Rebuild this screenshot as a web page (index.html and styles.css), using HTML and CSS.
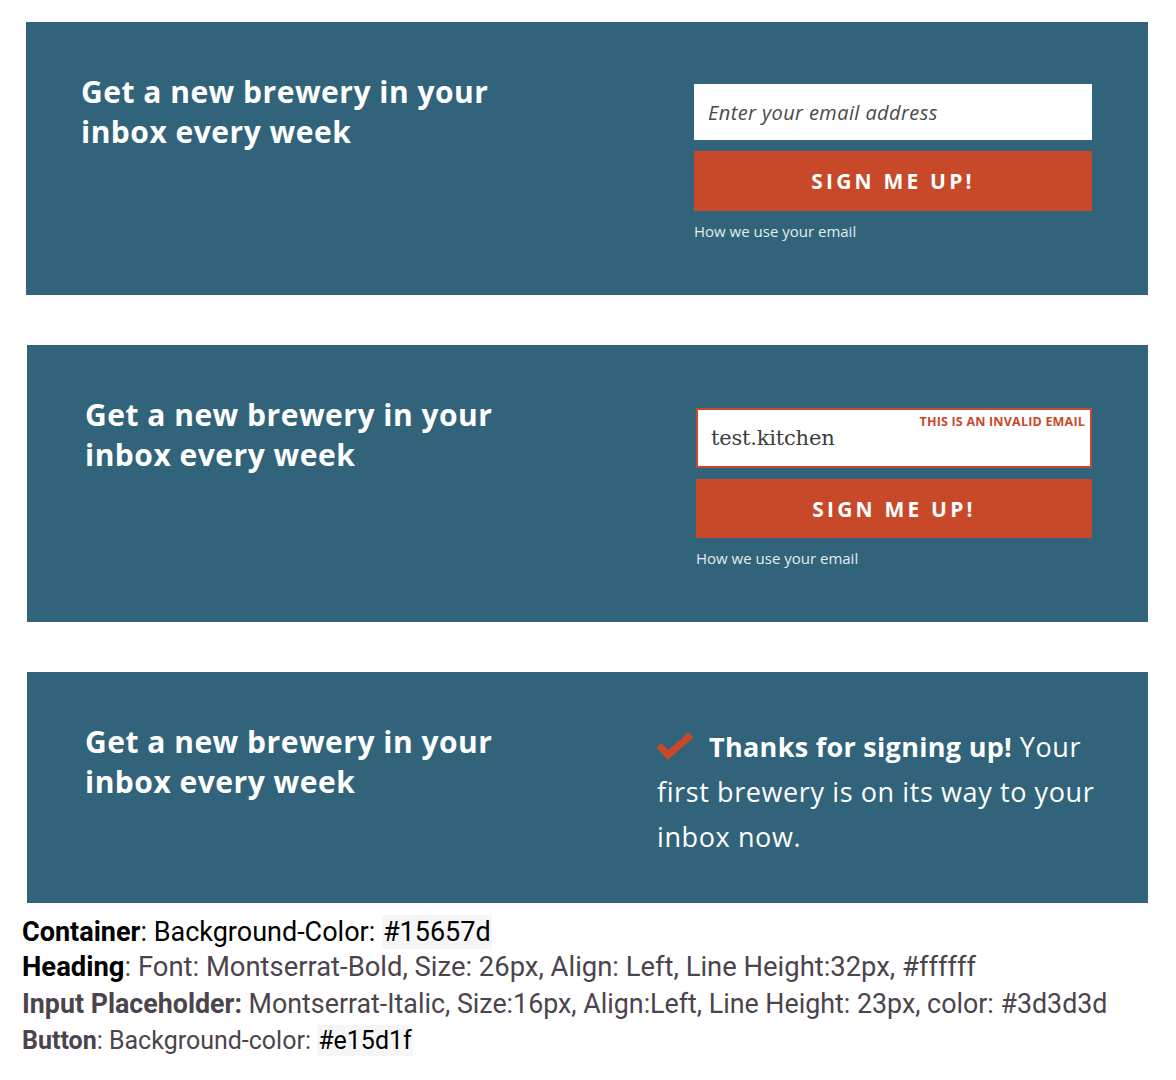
FILE: index.html
```html
<!DOCTYPE html>
<html lang="en">
<head>
<meta charset="utf-8">
<title>Brewery newsletter signup states</title>
<link rel="stylesheet" href="styles.css">
</head>
<body>
<main class="page">
  <section class="signup signup--first">
    <h2 class="signup__title">Get a new brewery in your<br>inbox every week</h2>
    <form class="signup__form">
      <div class="field">
        <input class="field__input" type="email" placeholder="Enter your email address">
      </div>
      <button class="btn" type="button">SIGN ME UP!</button>
      <a class="signup__note" href="#">How we use your email</a>
    </form>
  </section>

  <section class="signup">
    <h2 class="signup__title">Get a new brewery in your<br>inbox every week</h2>
    <form class="signup__form signup__form--narrow">
      <div class="field field--error">
        <input class="field__input field__input--filled" type="text" value="test.kitchen">
        <span class="field__error">THIS IS AN INVALID EMAIL</span>
      </div>
      <button class="btn" type="button">SIGN ME UP!</button>
      <a class="signup__note" href="#">How we use your email</a>
    </form>
  </section>

  <section class="signup signup--done">
    <h2 class="signup__title">Get a new brewery in your<br>inbox every week</h2>
    <p class="signup__thanks"><svg class="check" width="36" height="28" viewBox="0 0 36 28" aria-hidden="true"><polyline points="2,13 11,23 34,3" fill="none" stroke="#c8492a" stroke-width="7"/></svg><strong>Thanks for signing up!</strong> Your first brewery is on its way to your inbox now.</p>
  </section>

  <div class="specs">
    <p class="specs__line specs__line--dark"><b>Container</b>: Background-Color: <span class="code">#15657d</span></p>
    <p class="specs__line specs__line--wide"><b class="specs__key--dark">Heading</b>: Font: Montserrat-Bold, Size: 26px, Align: Left, Line Height:32px, #ffffff</p>
    <p class="specs__line specs__line--small"><b>Input Placeholder:</b> Montserrat-Italic, Size:16px, Align:Left, Line Height: 23px, color: #3d3d3d</p>
    <p class="specs__line specs__line--last"><b>Button</b>: Background-color: <span class="code code--dark">#e15d1f</span></p>
  </div>
</main>
</body>
</html>
```

FILE: styles.css
```css
* { box-sizing: border-box; }

html, body {
  margin: 0;
  padding: 0;
  background: #ffffff;
}

.page {
  width: 1176px;
  padding: 22px 28px 0 22px;
  display: flex;
  flex-direction: column;
  gap: 50px;
}

.signup {
  margin-left: 5px;
  width: 1121px;
  background: #31647a;
  display: flex;
  justify-content: space-between;
  align-items: flex-start;
  padding: 50px 56px 54px 58px;
  font-family: "Open Sans", "Noto Sans", sans-serif;
  color: #ffffff;
}

.signup--first {
  margin-left: 4px;
  width: 1122px;
  padding-left: 55px;
}

.signup__title {
  margin: 0;
  font-size: 30px;
  line-height: 40px;
  font-weight: 700;
  letter-spacing: 0.5px;
}

.signup__form {
  margin: 12px 0 0;
  width: 398px;
  display: flex;
  flex-direction: column;
}

.signup__form--narrow {
  width: 396px;
  margin-top: 13px;
}

.field {
  position: relative;
  height: 56px;
  background: #ffffff;
}

.field--error {
  height: 60px;
  border: 2px solid #c8492a;
}

.field__input {
  width: 100%;
  height: 100%;
  border: 0;
  outline: none;
  background: transparent;
  padding: 0 14px;
  font-family: "Open Sans", "Noto Sans", sans-serif;
  font-style: italic;
  font-size: 20px;
  letter-spacing: 0.4px;
  color: #3d3d3d;
}

.field__input::placeholder {
  color: #4a4a4a;
  opacity: 1;
}

.field__input--filled {
  font-family: "DejaVu Serif", "Liberation Serif", serif;
  font-style: normal;
  font-size: 21px;
  padding: 0 13px;
  color: #3d3d3d;
  letter-spacing: -0.2px;
}

.field__error {
  position: absolute;
  top: 4px;
  right: 5px;
  font-family: "Open Sans", "Noto Sans", sans-serif;
  font-weight: 700;
  font-size: 12.5px;
  line-height: 16px;
  letter-spacing: 0.2px;
  color: #c8492a;
}

.btn {
  margin-top: 11px;
  height: 60px;
  border: 0;
  background: #c8492a;
  color: #ffffff;
  font-family: "Open Sans", "Noto Sans", sans-serif;
  font-weight: 700;
  font-size: 21px;
  letter-spacing: 3.2px;
  cursor: pointer;
}

.signup__form--narrow .btn {
  height: 59px;
}

.signup__note {
  margin-top: 10px;
  font-size: 15px;
  line-height: 20px;
  color: #e3ebef;
  text-decoration: none;
}

.signup--done {
  padding-bottom: 44px;
  padding-right: 40px;
}

.signup__thanks {
  margin: 2px 0 0;
  width: 451px;
  font-size: 27px;
  line-height: 45px;
  font-weight: 400;
  letter-spacing: 0.6px;
  color: #ffffff;
}

.signup__thanks strong {
  font-weight: 700;
  letter-spacing: 0.3px;
}

.check {
  display: inline-block;
  vertical-align: -3px;
  margin-right: 16px;
}

.specs {
  margin-top: -38px;
  font-family: "Roboto", "Liberation Sans", sans-serif;
  font-size: 27px;
  color: #4b444d;
}

.specs__line {
  margin: 0;
  line-height: 35px;
  white-space: nowrap;
}

.specs__line--dark {
  color: #000000;
}

.specs__line--wide {
  font-size: 27.4px;
}

.specs__line b {
  font-weight: 700;
}

.specs__key--dark {
  color: #000000;
}

.specs__line--small {
  font-size: 26.8px;
  line-height: 38px;
}

.specs__line--last {
  font-size: 25px;
}

.code {
  background: #f6f6f6;
  padding: 1px 1px;
}

.code--dark {
  color: #000000;
}
```
